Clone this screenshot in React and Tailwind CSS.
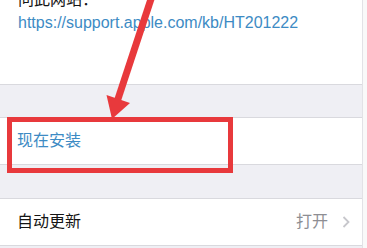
export default function App() {
  return (
    <div
      className="relative w-[367px] h-[248px] overflow-hidden bg-[#efeff4] flex"
      style={{ fontFamily: '"Liberation Sans", "Noto Sans CJK SC", sans-serif' }}
    >
      <div className="w-[362px] flex flex-col">
        <div className="h-[85px] bg-white border-b border-[#d9d9de] relative">
          <div className="absolute left-[18px] top-[-10px] text-[16px] leading-[20px] text-[#151515]">
            问此网站：
          </div>
          <div className="absolute left-[18px] top-[13px] text-[16px] leading-[20px] text-[#3d8bc4]">
            https://support.apple.com/kb/HT201222
          </div>
        </div>
        <div className="h-[32px]" />
        <div className="h-[48px] bg-white border-y border-[#d9d9de] flex items-center pl-[17px] text-[16px] text-[#3d8bc4]">
          现在安装
        </div>
        <div className="h-[33px]" />
        <div className="h-[48px] bg-white border-y border-[#d9d9de] flex items-center pl-[17px] pr-[12px] text-[16px] text-[#151515]">
          <span className="flex-1">自动更新</span>
          <span className="text-[#8e8e93] mr-[14px]">打开</span>
          <svg width="8" height="12" viewBox="0 0 8 12" className="shrink-0">
            <path d="M1.5 1 L6.5 6 L1.5 11" fill="none" stroke="#c7c7cc" strokeWidth="1.8" />
          </svg>
        </div>
      </div>
      <div className="flex-1 bg-[#f9f9f9] border-l border-[#e2e2e6]" />

      <div className="absolute left-[7px] top-[117px] w-[226px] h-[56px] border-[5px] border-[#e8393c]" />
      <svg className="absolute left-0 top-0" width="367" height="248" viewBox="0 0 367 248">
        <line x1="152" y1="-4" x2="117" y2="102" stroke="#e8393c" strokeWidth="7" />
        <polygon points="106.5,95 130,103 112,119" fill="#e8393c" />
      </svg>
    </div>
  );
}
